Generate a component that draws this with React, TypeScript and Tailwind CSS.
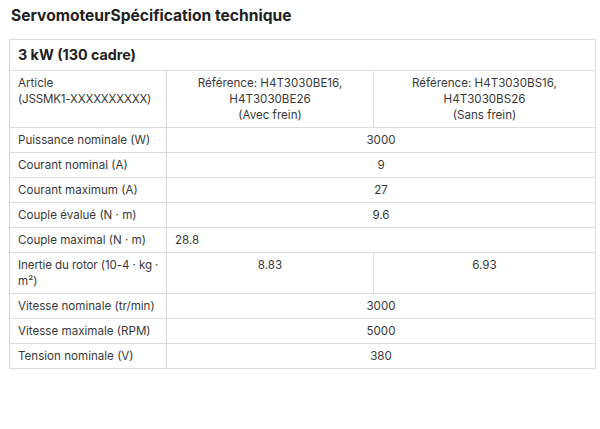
import React from 'react';

const cell = 'border border-[#dcdcdc] px-2 py-1 leading-4 align-top';

const rows: { label: React.ReactNode; value: string }[] = [
  { label: 'Puissance nominale (W)', value: '3000' },
  { label: 'Courant nominal (A)', value: '9' },
  { label: 'Courant maximum (A)', value: '27' },
  { label: 'Couple évalué (N · m)', value: '9.6' },
];

const rowsAfter: { label: string; value: string }[] = [
  { label: 'Vitesse nominale (tr/min)', value: '3000' },
  { label: 'Vitesse maximale (RPM)', value: '5000' },
  { label: 'Tension nominale (V)', value: '380' },
];

const App: React.FC = () => {
  return (
    <div className="w-[600px] h-[429px] bg-white text-[#3a3a3a] font-['Inter','Liberation_Sans',sans-serif]">
      <h1 className="pl-[11px] pt-[5px] text-[15.6px] leading-[22px] font-bold text-[#222]">
        ServomoteurSpécification technique
      </h1>
      <table className="ml-[9px] mt-3 w-[587px] table-fixed border-collapse text-[11.6px]">
        <colgroup>
          <col className="w-[157px]" />
          <col className="w-[207px]" />
          <col />
        </colgroup>
        <tbody>
          <tr>
            <td colSpan={3} className="border border-[#dcdcdc] px-2 py-[5px] text-[14.3px] leading-5 font-bold text-[#222]">
              3 kW (130 cadre)
            </td>
          </tr>
          <tr>
            <td className={`${cell} whitespace-nowrap`}>
              Article
              <br />
              <span className="tracking-[-0.2px]">(JSSMK1-XXXXXXXXXX)</span>
            </td>
            <td className={`${cell} text-center`}>
              Référence: H4T3030BE16,
              <br />
              H4T3030BE26
              <br />
              (Avec frein)
            </td>
            <td className={`${cell} text-center`}>
              Référence: H4T3030BS16,
              <br />
              H4T3030BS26
              <br />
              (Sans frein)
            </td>
          </tr>
          {rows.map(r => (
            <tr key={r.label}>
              <td className={`${cell} whitespace-nowrap`}>{r.label}</td>
              <td colSpan={2} className={`${cell} text-center`}>{r.value}</td>
            </tr>
          ))}
          <tr>
            <td className={`${cell} whitespace-nowrap`}>Couple maximal (N · m)</td>
            <td colSpan={2} className={cell}>28.8</td>
          </tr>
          <tr>
            <td className={`${cell} whitespace-nowrap`}>
              <span className="tracking-[-0.1px]">Inertie du rotor (10-4 · kg ·</span>
              <br />
              m²)
            </td>
            <td className={`${cell} text-center`}>8.83</td>
            <td className={`${cell} text-center`}>6.93</td>
          </tr>
          {rowsAfter.map(r => (
            <tr key={r.label}>
              <td className={`${cell} whitespace-nowrap`}>{r.label}</td>
              <td colSpan={2} className={`${cell} text-center`}>{r.value}</td>
            </tr>
          ))}
        </tbody>
      </table>
    </div>
  );
};

export default App;
